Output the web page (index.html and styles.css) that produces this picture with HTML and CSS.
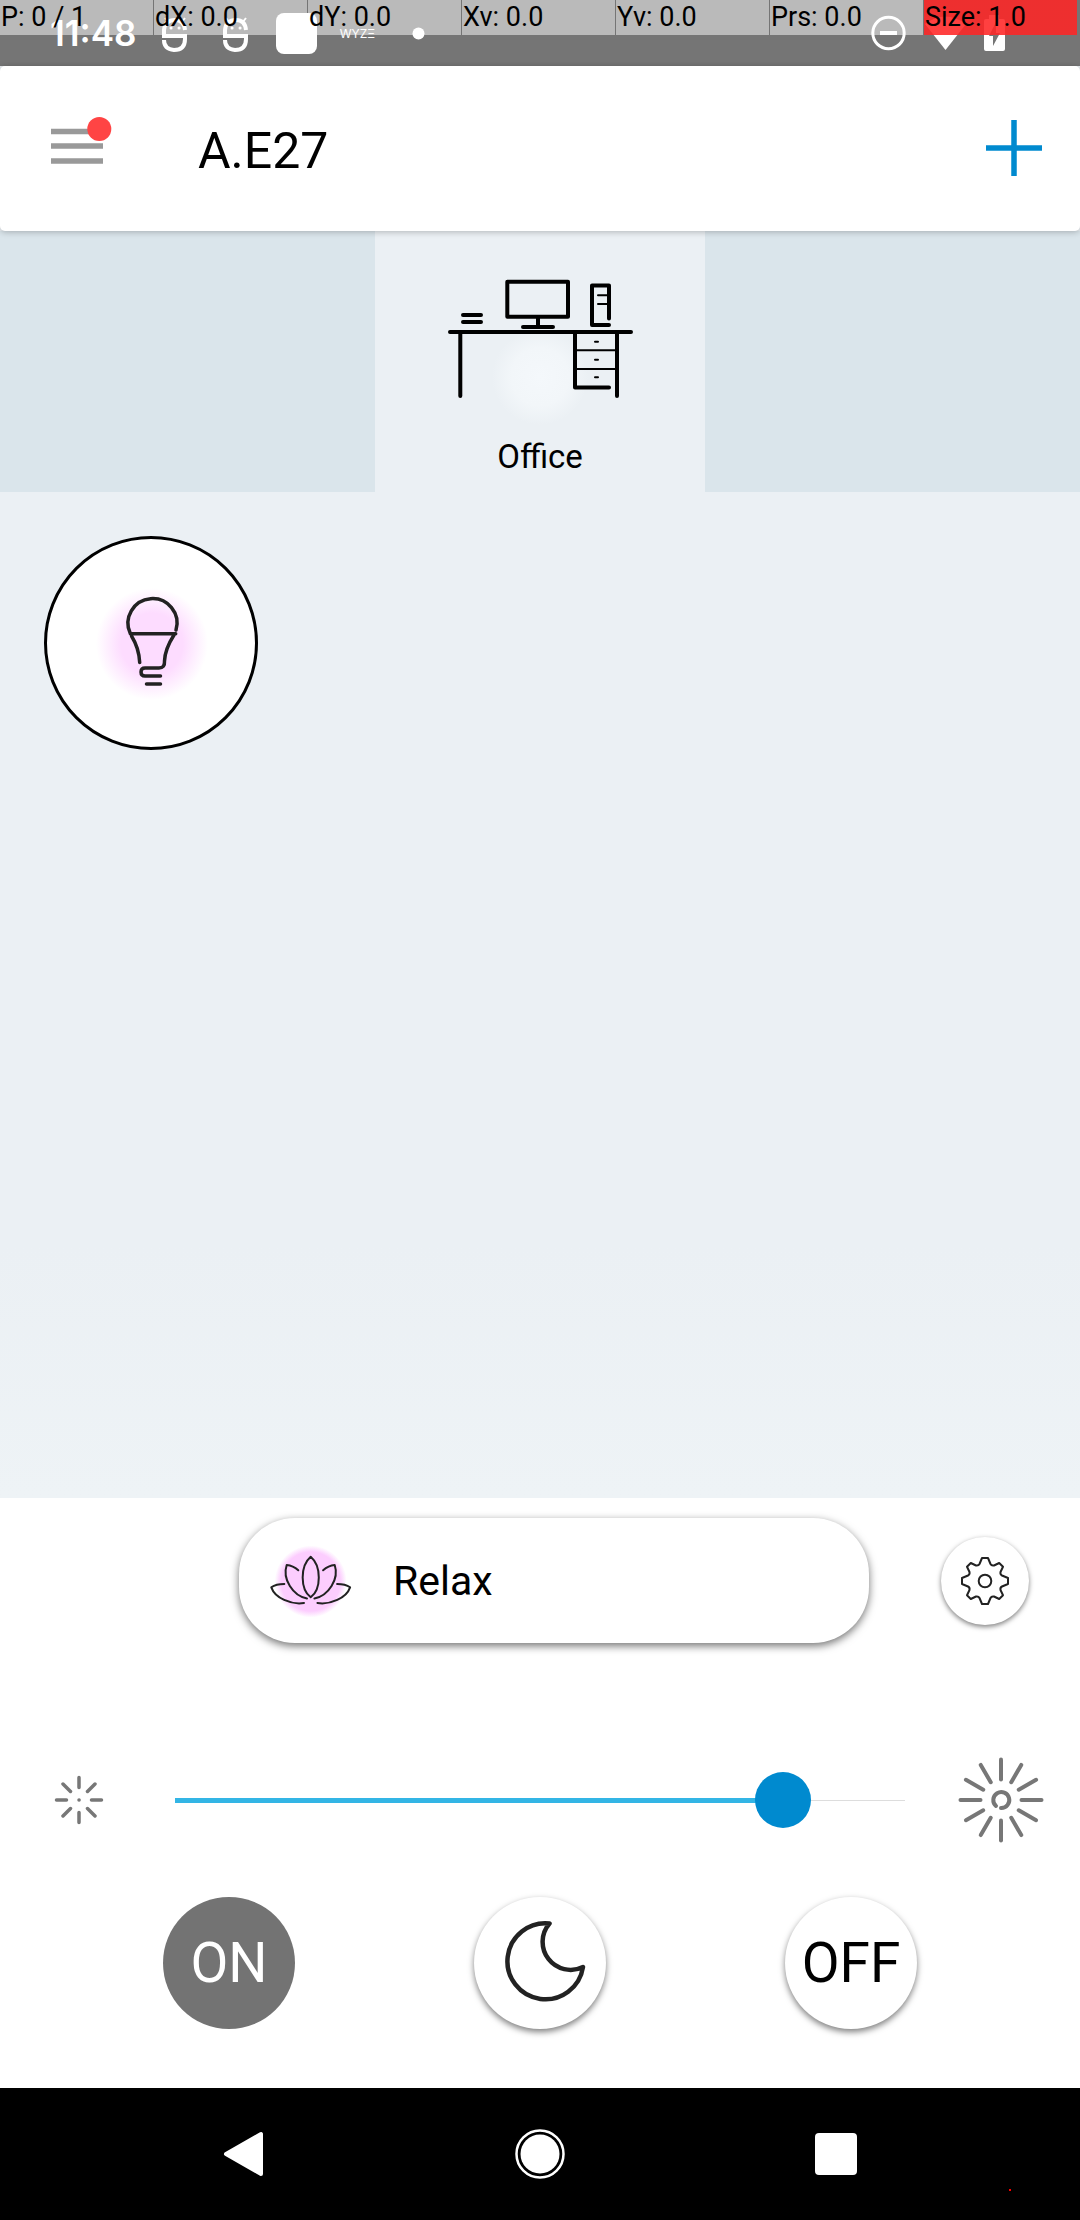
FILE: index.html
```html
<!DOCTYPE html>
<html lang="en">
<head>
<meta charset="utf-8">
<meta name="viewport" content="width=device-width, initial-scale=1">
<title>A.E27</title>
<link rel="stylesheet" href="styles.css">
</head>
<body>
<div class="status">
  <span class="clock">11:48</span>
  <div class="notices">
    <svg class="notice" viewBox="0 0 41 41" fill="none" stroke="#fff" stroke-width="4"><path d="M31 17Q30 7 21 7Q11 7 10 17V23H31V26Q31 37 20 37Q10 36 10 27"/><path d="M11 5l4 5M31 5l-4 5" stroke-width="2"/><path d="M17 15h.1M25 15h.1" stroke-width="3" stroke-linecap="round"/></svg>
    <svg class="notice" viewBox="0 0 41 41" fill="none" stroke="#fff" stroke-width="4"><path d="M31 17Q30 7 21 7Q11 7 10 17V23H31V26Q31 37 20 37Q10 36 10 27"/><path d="M11 5l4 5M31 5l-4 5" stroke-width="2"/><path d="M17 15h.1M25 15h.1" stroke-width="3" stroke-linecap="round"/></svg>
    <svg class="notice" viewBox="0 0 41 41"><rect width="41" height="41" rx="8" fill="#fff"/></svg>
    <span class="notice wyze">WYZΞ</span>
    <svg class="notice" viewBox="0 0 41 41"><circle cx="20.500" cy="20.500" r="6" fill="#fff"/></svg>
  </div>
  <div class="signals">
    <svg class="signal" viewBox="0 0 41 41" fill="none" stroke="#fff"><circle cx="20.500" cy="20" r="15.700" stroke-width="3"/><path d="M12 20h17" stroke-width="4"/></svg>
    <svg class="signal" viewBox="0 0 41 41"><path d="M0 11Q20 -4 41 11L20.500 37Z" fill="#fff"/></svg>
    <svg class="battery" viewBox="0 0 24 41"><path d="M7 2h10v4h4q2 0 2 2v28q0 2-2 2H4q-2 0-2-2V8q0-2 2-2h3Z" fill="#fff"/><path d="M14 9v11h4l-7 13v-10H7Z" fill="#757575"/></svg>
  </div>
  <div class="pointer">
    <span>P: 0 / 1</span><span>dX: 0.0</span><span>dY: 0.0</span><span>Xv: 0.0</span><span>Yv: 0.0</span><span>Prs: 0.0</span><span class="size">Size: 1.0</span>
  </div>
</div>

<header class="bar">
  <button class="icon-button menu" aria-label="Menu">
    <svg width="62" height="62" viewBox="0 0 62 62"><path d="M0 14.500h52M0 29h52M0 44h52" stroke="#999" stroke-width="5.500"/><circle cx="48.300" cy="12" r="12" fill="#f44"/></svg>
  </button>
  <h1 class="title">A.E27</h1>
  <button class="icon-button" aria-label="Add">
    <svg width="56" height="56" viewBox="0 0 56 56"><path d="M28 0v56M0 28h56" stroke="#008acf" stroke-width="5.500"/></svg>
  </button>
</header>

<nav class="rooms">
  <button class="room">
    <svg width="198" height="160" viewBox="0 0 198 160" fill="none" stroke="#000" stroke-width="4" stroke-linecap="round" stroke-linejoin="round">
      <defs><radialGradient id="room-glow"><stop offset="0" stop-color="#f4f8fb"/><stop offset=".6" stop-color="#f2f6f9"/><stop offset="1" stop-color="#ebf0f4"/></radialGradient></defs>
      <circle cx="99" cy="107" r="48" fill="url(#room-glow)" stroke="none"/>
      <path d="M9 62H190M19.300 62V126M176 62V126M134 62V117.500H168M66.300 11.700H127V46.700H66.300ZM97 47V56M82 57H112M22 45H40M22 52H40M168 48.500V15.500H151V55H168"/>
      <path d="M134 80.300H176M134 99H176M154 71.700H157M154 89.700H157M154 107.300H157M157 25.300H168M157 34H168" stroke-width="2"/>
    </svg>
    <span class="room-name">Office</span>
  </button>
</nav>

<main class="devices">
  <button class="device" aria-label="Bulb">
    <svg width="208" height="208" viewBox="0 0 208 208" fill="none" stroke="#222" stroke-width="3.500" stroke-linecap="round" stroke-linejoin="round">
      <defs><radialGradient id="bulb-glow"><stop offset="0" stop-color="#fddcff"/><stop offset=".55" stop-color="#fddcff"/><stop offset="1" stop-color="#fff"/></radialGradient></defs>
      <circle cx="105" cy="105" r="56" fill="url(#bulb-glow)" stroke="none"/>
      <path d="M83.300 94.500A24.500 24.500 0 1 1 129 91M83.300 94.700H128.700M84.500 97Q92 109 92.700 123.500M127 96Q118 110 117.500 122Q118 129 112 129H98Q94 129 94 133T98 137H113.500M99.500 145H113.500"/>
    </svg>
  </button>
</main>

<section class="controls">
  <div class="scene-row">
    <button class="scene">
      <svg width="88" height="88" viewBox="0 0 88 88" fill="none" stroke="#222" stroke-width="2" stroke-linecap="round" stroke-linejoin="round">
        <defs><radialGradient id="scene-glow"><stop offset="0" stop-color="#fccdfe"/><stop offset=".82" stop-color="#fccdfe"/><stop offset="1" stop-color="#fccdfe" stop-opacity="0"/></radialGradient></defs>
        <circle cx="43.700" cy="44.500" r="36" fill="url(#scene-glow)" stroke="none"/>
        <path d="M43.700 19.700C33 29 33 52 43.700 60.300C54.500 52 54.500 29 43.700 19.700ZM31.300 33.300Q26 28.500 19.700 28C15 42 26 59 40 61.500M56.100 33.300Q61.400 28.500 67.700 28C72.400 42 61.400 59 47.400 61.500M17.300 47Q9 47 4.300 50.300C8 61 24 68 37 66M70.100 47Q78.400 47 83.100 50.300C79.400 61 63.400 68 50.400 66"/>
      </svg>
      <span>Relax</span>
    </button>
    <button class="settings" aria-label="Settings">
      <svg width="50" height="50" viewBox="-25 -25 50 50" fill="none" stroke="#222" stroke-width="2" stroke-linejoin="round"><path d="M-3-23H3L5.500-17Q6.500-15 9-15.500L14.200-18L18-14.200L15.500-9Q15-6.500 17-5.500L23-3V3L17 5.500Q15 6.500 15.500 9L18 14.200L14.200 18L9 15.500Q6.500 15 5.500 17L3 23H-3L-5.500 17Q-6.500 15-9 15.500L-14.200 18L-18 14.200L-15.500 9Q-15 6.500-17 5.500L-23 3V-3L-17-5.500Q-15-6.500-15.500-9L-18-14.200L-14.200-18L-9-15.500Q-6.500-15-5.500-17Z"/><circle r="6.300"/></svg>
    </button>
  </div>

  <div class="dimmer">
    <svg width="96" height="96" viewBox="-48 -48 96 96" fill="none" stroke="#777" stroke-width="3.500" stroke-linecap="round"><path d="M0-22.500V-12.500M0 12.500V22.500M-22.500 0H-12.500M12.500 0H22.500M-16-16L-8.500-8.500M16-16L8.500-8.500M-16 16L-8.500 8.500M16 16L8.500 8.500M0 0h.1"/></svg>
    <input class="slider" type="range" min="0" max="100" value="86" aria-label="Brightness">
    <svg width="96" height="96" viewBox="-48 -48 96 96" fill="none" stroke="#777" stroke-width="4" stroke-linecap="round">
      <g id="rays"><path id="ray" d="M0-40.500V-20.500"/><use href="#ray" transform="rotate(30)"/><use href="#ray" transform="rotate(60)"/></g>
      <use href="#rays" transform="rotate(90)"/><use href="#rays" transform="rotate(180)"/><use href="#rays" transform="rotate(270)"/>
      <path d="M-5 6A8 8 0 1 1 0 8"/>
    </svg>
  </div>

  <div class="power">
    <button class="round on">ON</button>
    <button class="round" aria-label="Night">
      <svg width="132" height="132" viewBox="0 0 132 132" fill="none" stroke="#222" stroke-width="4.500" stroke-linejoin="round"><path d="M75.500 26.500A38 38 0 1 0 109 70A28 28 0 0 1 75.500 26.500Z"/></svg>
    </button>
    <button class="round">OFF</button>
  </div>
</section>

<nav class="system">
  <button class="icon-button" aria-label="Back"><svg width="60" height="60" viewBox="0 0 60 60"><path d="M12 30L47 10V50Z" fill="#fff" stroke="#fff" stroke-width="4" stroke-linejoin="round"/></svg></button>
  <button class="icon-button" aria-label="Home"><svg width="60" height="60" viewBox="0 0 60 60"><circle cx="30" cy="30" r="23.500" fill="none" stroke="#fff" stroke-width="2.500"/><circle cx="30" cy="30" r="19.500" fill="#fff"/></svg></button>
  <button class="icon-button" aria-label="Recent apps"><svg width="60" height="60" viewBox="0 0 60 60"><rect x="9" y="9" width="42" height="42" rx="4" fill="#fff"/></svg></button>
  <span class="trace"></span>
</nav>
</body>
</html>
```
FILE: styles.css
```css
* {
  box-sizing: border-box;
}

body {
  margin: 0;
  min-height: 100vh;
  display: flex;
  flex-direction: column;
  font-family: Roboto, "Liberation Sans", sans-serif;
  color: #000;
  background: #ebf0f4;
}

button {
  margin: 0;
  padding: 0;
  border: 0;
  background: none;
  font: inherit;
  color: inherit;
  cursor: pointer;
}

svg {
  display: block;
  flex: none;
}

.icon-button {
  display: flex;
}

/* Status bar */
.status {
  position: relative;
  display: flex;
  align-items: center;
  height: 66px;
  padding: 0 74px 0 50px;
  background: #757575;
  color: #fff;
}

.clock {
  width: 104px;
  font: 600 35px/41px Inter, sans-serif;
}

.notices {
  display: flex;
  gap: 20px;
}

.notice,
.signal {
  width: 41px;
  height: 41px;
}

.wyze {
  font: 400 12px/41px Inter, sans-serif;
  text-align: center;
}

.signals {
  display: flex;
  gap: 16px;
  margin-left: auto;
}

.battery {
  width: 24px;
  height: 41px;
}

/* Pointer read-out, drawn over the status bar */
.pointer {
  position: absolute;
  inset: 0 0 auto;
  display: grid;
  grid-template-columns: repeat(7, 1fr);
  gap: 1px;
  padding-right: 3px;
  height: 35px;
  font-size: 27px;
  line-height: 35px;
  color: #000;
}

.pointer span {
  padding-left: 1px;
  background: rgba(255, 255, 255, .5);
  white-space: nowrap;
}

.pointer .size {
  background: linear-gradient(rgba(255, 0, 0, .75), rgba(255, 0, 0, .75)), rgba(255, 255, 255, .5);
}

/* App bar */
.bar {
  position: relative;
  display: flex;
  align-items: center;
  height: 165px;
  padding: 0 38px 2px 51px;
  border-radius: 5px;
  background: #fff;
  box-shadow: 0 1px 6px rgba(0, 0, 0, .25);
}

.title {
  flex: 1;
  margin: 0;
  padding: 6px 0 0 85px;
  font-size: 50px;
  font-weight: 400;
  line-height: 60px;
}

/* Rooms */
.rooms {
  display: flex;
  justify-content: center;
  background: #dae5eb;
}

.room {
  display: flex;
  flex-direction: column;
  align-items: center;
  gap: 8px;
  width: 330px;
  padding: 39px 0 16px;
  background: #ebf0f4;
}

.room-name {
  font-size: 33px;
  line-height: 38px;
}

/* Devices */
.devices {
  flex: 1;
  padding: 44px;
  background: linear-gradient(#ebf0f4 75%, #eef3f6);
}

.device {
  border: 3px solid #000;
  border-radius: 50%;
  background: #fff;
  overflow: hidden;
}

/* Controls */
.controls {
  background: #fff;
  padding: 20px 0 59px;
}

.scene-row {
  display: flex;
  align-items: center;
  gap: 72px;
  padding: 0 51px 0 239px;
}

.scene {
  flex: 1;
  display: flex;
  align-items: center;
  gap: 38px;
  height: 125px;
  padding: 0 28px;
  border-radius: 56px;
  background: #fff;
  box-shadow: 0 3px 8px rgba(0, 0, 0, .55);
  font-size: 41px;
  line-height: 50px;
}

.settings {
  display: grid;
  place-items: center;
  width: 88px;
  height: 88px;
  border-radius: 50%;
  background: #fff;
  box-shadow: 0 2px 5px rgba(0, 0, 0, .5);
}

.dimmer {
  display: grid;
  grid-template-columns: 96px 1fr 96px;
  align-items: center;
  gap: 48px;
  padding: 109px 31px 49px;
}

.slider {
  appearance: none;
  width: 100%;
  height: 56px;
  margin: 0;
  background:
    linear-gradient(#33b5e5, #33b5e5) left center / 83% 5px no-repeat,
    linear-gradient(#ddd, #ddd) center / 100% 1px no-repeat;
}

.slider::-webkit-slider-thumb {
  appearance: none;
  width: 56px;
  height: 56px;
  border-radius: 50%;
  background: #008acf;
}

.power {
  display: flex;
  justify-content: center;
  gap: 179px;
}

.round {
  display: grid;
  place-items: center;
  width: 132px;
  height: 132px;
  border-radius: 50%;
  background: #fff;
  box-shadow: 0 3px 6px rgba(0, 0, 0, .5);
  font-size: 55px;
  line-height: 66px;
}

.round.on {
  background: #737373;
  box-shadow: none;
  color: #fff;
}

/* System navigation */
.system {
  position: relative;
  display: flex;
  align-items: center;
  justify-content: center;
  gap: 236px;
  height: 132px;
  background: #000;
}

.trace {
  position: absolute;
  right: 69px;
  bottom: 29px;
  width: 2px;
  height: 2px;
  background: #f00;
}
```
